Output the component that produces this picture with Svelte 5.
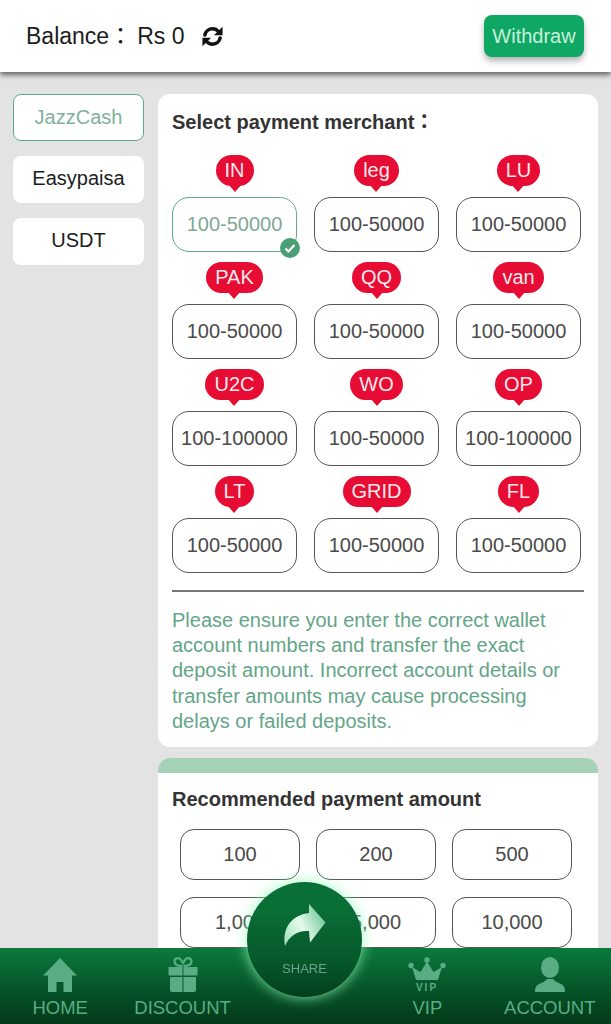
<script>
  const tabs = ['JazzCash', 'Easypaisa', 'USDT']
  const merchants = [
    { tag: 'IN', range: '100-50000' },
    { tag: 'leg', range: '100-50000' },
    { tag: 'LU', range: '100-50000' },
    { tag: 'PAK', range: '100-50000' },
    { tag: 'QQ', range: '100-50000' },
    { tag: 'van', range: '100-50000' },
    { tag: 'U2C', range: '100-100000' },
    { tag: 'WO', range: '100-50000' },
    { tag: 'OP', range: '100-100000' },
    { tag: 'LT', range: '100-50000' },
    { tag: 'GRID', range: '100-50000' },
    { tag: 'FL', range: '100-50000' }
  ]
  const amounts = ['100', '200', '500', '1,000', '5,000', '10,000']

  let activeTab = $state(0)
  let activeMerchant = $state(0)
</script>

<div class="page">
  <header class="top">
    <div class="balance">
      <span>Balance：</span>
      <span class="money">Rs 0</span>
      <svg class="refresh" viewBox="0 0 24 24" width="23" height="23" aria-hidden="true">
        <path d="M4 10.500C4.800 6.600 8 4 12 4c2.500 0 4.600 1 6 2.800" fill="none" stroke="#111" stroke-width="3.600" stroke-linecap="round" />
        <path d="M22.500 1.800v9h-9z" fill="#111" />
        <path d="M20 13.500c-.8 3.900-4 6.500-8 6.500-2.500 0-4.600-1-6-2.800" fill="none" stroke="#111" stroke-width="3.600" stroke-linecap="round" />
        <path d="M1.500 22.200v-9h9z" fill="#111" />
      </svg>
    </div>
    <button class="withdraw">Withdraw</button>
  </header>

  <div class="content">
    <aside class="tabs">
      {#each tabs as tab, i}
        <button class="tab" class:active={activeTab === i} onclick={() => (activeTab = i)}>{tab}</button>
      {/each}
    </aside>

    <main class="main">
      <section class="panel">
        <h2>Select payment merchant：</h2>
        <div class="merchants">
          {#each merchants as m, i}
            <div class="merchant">
              <span class="tag">{m.tag}</span>
              <button class="range" class:active={activeMerchant === i} onclick={() => (activeMerchant = i)}>
                {m.range}
                {#if activeMerchant === i}
                  <svg class="check" viewBox="0 0 20 20" width="20" height="20" aria-hidden="true">
                    <circle cx="10" cy="10" r="10" fill="#4a9f74" />
                    <path d="M5.500 10.500l3 3 6-6.500" fill="none" stroke="#fff" stroke-width="2.200" />
                  </svg>
                {/if}
              </button>
            </div>
          {/each}
        </div>
        <div class="rule"></div>
        <p class="note">
          Please ensure you enter the correct wallet account numbers and transfer the exact deposit amount. Incorrect account details or transfer amounts may cause processing delays or failed deposits.
        </p>
      </section>

      <section class="panel amounts-panel">
        <div class="band"></div>
        <h2>Recommended payment amount</h2>
        <div class="amounts">
          {#each amounts as a}
            <button class="amount">{a}</button>
          {/each}
        </div>
      </section>
    </main>
  </div>

  <nav class="nav">
    <div class="nav-item">
      <svg viewBox="0 0 36 36" width="36" height="36" aria-hidden="true">
        <path d="M18 1L35 18.500H30V35H21.500V25H14.500V35H6V18.500H1z" fill="#58ad84" />
      </svg>
      <span>HOME</span>
    </div>
    <div class="nav-item">
      <svg viewBox="0 0 36 36" width="36" height="36" aria-hidden="true">
        <path d="M17.500 9C13 9 9.500 8 9.500 4.500 9.500 1 14 0 16 3l2 3 2-3c2-3 6.500-2 6.500 1.500C26.500 8 23 9 18.500 9" fill="none" stroke="#58ad84" stroke-width="2.200" />
        <path d="M3.500 10h14v8.500h-14zM18.500 10h14v8.500h-14zM5 20h12.500v15H7a2 2 0 0 1-2-2zM18.500 20H31v13a2 2 0 0 1-2 2H18.500z" fill="#58ad84" />
      </svg>
      <span>DISCOUNT</span>
    </div>
    <div class="nav-spacer"></div>
    <div class="nav-item">
      <svg viewBox="0 0 38 36" width="38" height="36" aria-hidden="true">
        <path d="M4 10l8.500 5L19 4.500 25.500 15 34 10l-4 13H8z" fill="#58ad84" />
        <circle cx="3" cy="8.500" r="2.700" fill="#58ad84" />
        <circle cx="19" cy="3" r="2.700" fill="#58ad84" />
        <circle cx="35" cy="8.500" r="2.700" fill="#58ad84" />
        <text x="19" y="34" class="vip-mark">VIP</text>
      </svg>
      <span>VIP</span>
    </div>
    <div class="nav-item">
      <svg viewBox="0 0 36 36" width="36" height="36" aria-hidden="true">
        <ellipse cx="18" cy="10.500" rx="9" ry="10.500" fill="#58ad84" />
        <path d="M3 35c0-2 0-6 4-8 3-1.500 6-2 8-5h6c2 3 5 3.500 8 5 4 2 4 6 4 8z" fill="#58ad84" />
      </svg>
      <span>ACCOUNT</span>
    </div>
  </nav>

  <button class="share">
    <svg viewBox="0 0 43 43" width="43" height="43" aria-hidden="true">
      <defs>
        <linearGradient id="shareFill" x1="0" y1="0.8" x2="1" y2="0.3">
          <stop offset="0" stop-color="#a8e6c2" />
          <stop offset="0.45" stop-color="#e4f9ec" />
          <stop offset="1" stop-color="#6fc796" />
        </linearGradient>
      </defs>
      <path d="M26 0l16.500 18.500L27 38.500 26 27C15 26 6 32 2 42-1 25 8 11 26 9z" fill="url(#shareFill)" />
    </svg>
    <span>SHARE</span>
  </button>
</div>

<style>
  :global(body) {
    margin: 0;
    background: #e3e3e3;
  }
  .page {
    height: 1024px;
    overflow: hidden;
    background: #e3e3e3;
    font-family: "Liberation Sans", "Noto Sans CJK TC", Arial, sans-serif;
    color: #222;
    position: relative;
  }
  button {
    font-family: inherit;
    cursor: pointer;
    padding: 0;
  }
  .top {
    height: 72px;
    box-sizing: border-box;
    padding: 0 27px 0 26px;
    background: #fff;
    display: flex;
    align-items: center;
    justify-content: space-between;
    box-shadow: 0 3px 5px rgba(0, 0, 0, 0.55);
    position: relative;
  }
  .balance {
    display: flex;
    align-items: center;
    font-size: 23px;
    line-height: 28px;
    color: #1c1c1c;
  }
  .money {
    margin-left: 5px;
  }
  .refresh {
    margin-left: 17px;
  }
  .withdraw {
    width: 100px;
    height: 42px;
    border: none;
    border-radius: 8px;
    background: #0ea763;
    color: #c9efdb;
    font-size: 20px;
    box-shadow: 0 4px 6px rgba(0, 0, 0, 0.3);
  }
  .content {
    display: flex;
    align-items: flex-start;
    padding: 22px 13px 0;
    gap: 14px;
  }
  .tabs {
    width: 131px;
    flex: none;
    display: flex;
    flex-direction: column;
    gap: 15px;
  }
  .tab {
    height: 47px;
    border: none;
    border-radius: 8px;
    background: #fff;
    font-size: 20px;
    padding-bottom: 2px;
    color: #1c1c1c;
  }
  .tab.active {
    border: 1.5px solid #5fa98a;
    padding-bottom: 0;
    color: #7fb09a;
  }
  .main {
    flex: 1;
    display: flex;
    flex-direction: column;
    gap: 11px;
  }
  .panel {
    background: #fff;
    border-radius: 12px;
    padding: 16px 14px 13px;
  }
  h2 {
    margin: 0;
    font-size: 20px;
    line-height: 24px;
    height: 24px;
    font-weight: 700;
    color: #333;
  }
  .merchants {
    display: grid;
    grid-template-columns: repeat(3, 125px);
    justify-content: space-between;
    margin-top: 21px;
    padding-right: 3px;
  }
  .merchant {
    height: 107px;
    display: flex;
    flex-direction: column;
    align-items: center;
  }
  .tag {
    height: 31px;
    min-width: 38px;
    box-sizing: border-box;
    padding: 0 9px;
    border-radius: 16px;
    background: #e60c33;
    color: #fde8ec;
    font-size: 20px;
    line-height: 31px;
    text-align: center;
    position: relative;
  }
  .tag::after {
    content: "";
    position: absolute;
    left: 50%;
    bottom: -6px;
    margin-left: -7px;
    border-left: 7px solid transparent;
    border-right: 7px solid transparent;
    border-top: 8px solid #e60c33;
  }
  .range {
    width: 125px;
    height: 55px;
    margin-top: 11px;
    border: 1.5px solid #555;
    border-radius: 17px;
    background: #fff;
    font-size: 20px;
    color: #4a4a4a;
    position: relative;
  }
  .range.active {
    border-color: #5fa98a;
    color: #7fa896;
  }
  .check {
    position: absolute;
    right: -4px;
    bottom: -7px;
  }
  .rule {
    height: 2px;
    margin-top: 7px;
    background: #777;
  }
  .note {
    margin: 16px 0 0;
    font-size: 20px;
    line-height: 25.200px;
    color: #63a587;
  }
  .amounts-panel {
    position: relative;
    padding-top: 29px;
  }
  .band {
    position: absolute;
    inset: 0 0 auto;
    height: 15px;
    border-radius: 12px 12px 0 0;
    background: #a5d2b6;
  }
  .amounts {
    display: grid;
    grid-template-columns: repeat(3, 120px);
    justify-content: space-between;
    row-gap: 17px;
    margin-top: 18px;
    padding: 0 12px 0 8px;
  }
  .amount {
    height: 51px;
    border: 1.5px solid #555;
    border-radius: 14px;
    background: #fff;
    font-size: 20px;
    color: #4a4a4a;
  }
  .nav {
    position: fixed;
    left: -1px;
    right: 0;
    bottom: 0;
    height: 76px;
    display: grid;
    grid-template-columns: repeat(5, 1fr);
    background: linear-gradient(#0b7a3d, #055026 60%, #033a19);
  }
  .nav-item {
    display: flex;
    flex-direction: column;
    align-items: center;
    padding-top: 9px;
    color: #58ad84;
    font-size: 18.500px;
  }
  .nav-item span {
    line-height: 24px;
    margin-top: 3px;
  }
  .vip-mark {
    font: 700 10px "Liberation Sans", sans-serif;
    letter-spacing: 2px;
    fill: #58ad84;
    text-anchor: middle;
  }
  .share {
    position: fixed;
    left: 247px;
    top: 882px;
    width: 115px;
    height: 115px;
    border: none;
    border-radius: 50%;
    background: linear-gradient(#0a6f37 20%, #06572a 70%, #033f1d);
    box-shadow: 0 0 14px rgba(150, 255, 190, 0.9);
    display: flex;
    flex-direction: column;
    align-items: center;
    padding-top: 22px;
    box-sizing: border-box;
    color: #6aa387;
    font-size: 13px;
  }
  .share svg {
    flex: none;
  }
  .share span {
    margin-top: 14px;
  }
</style>
